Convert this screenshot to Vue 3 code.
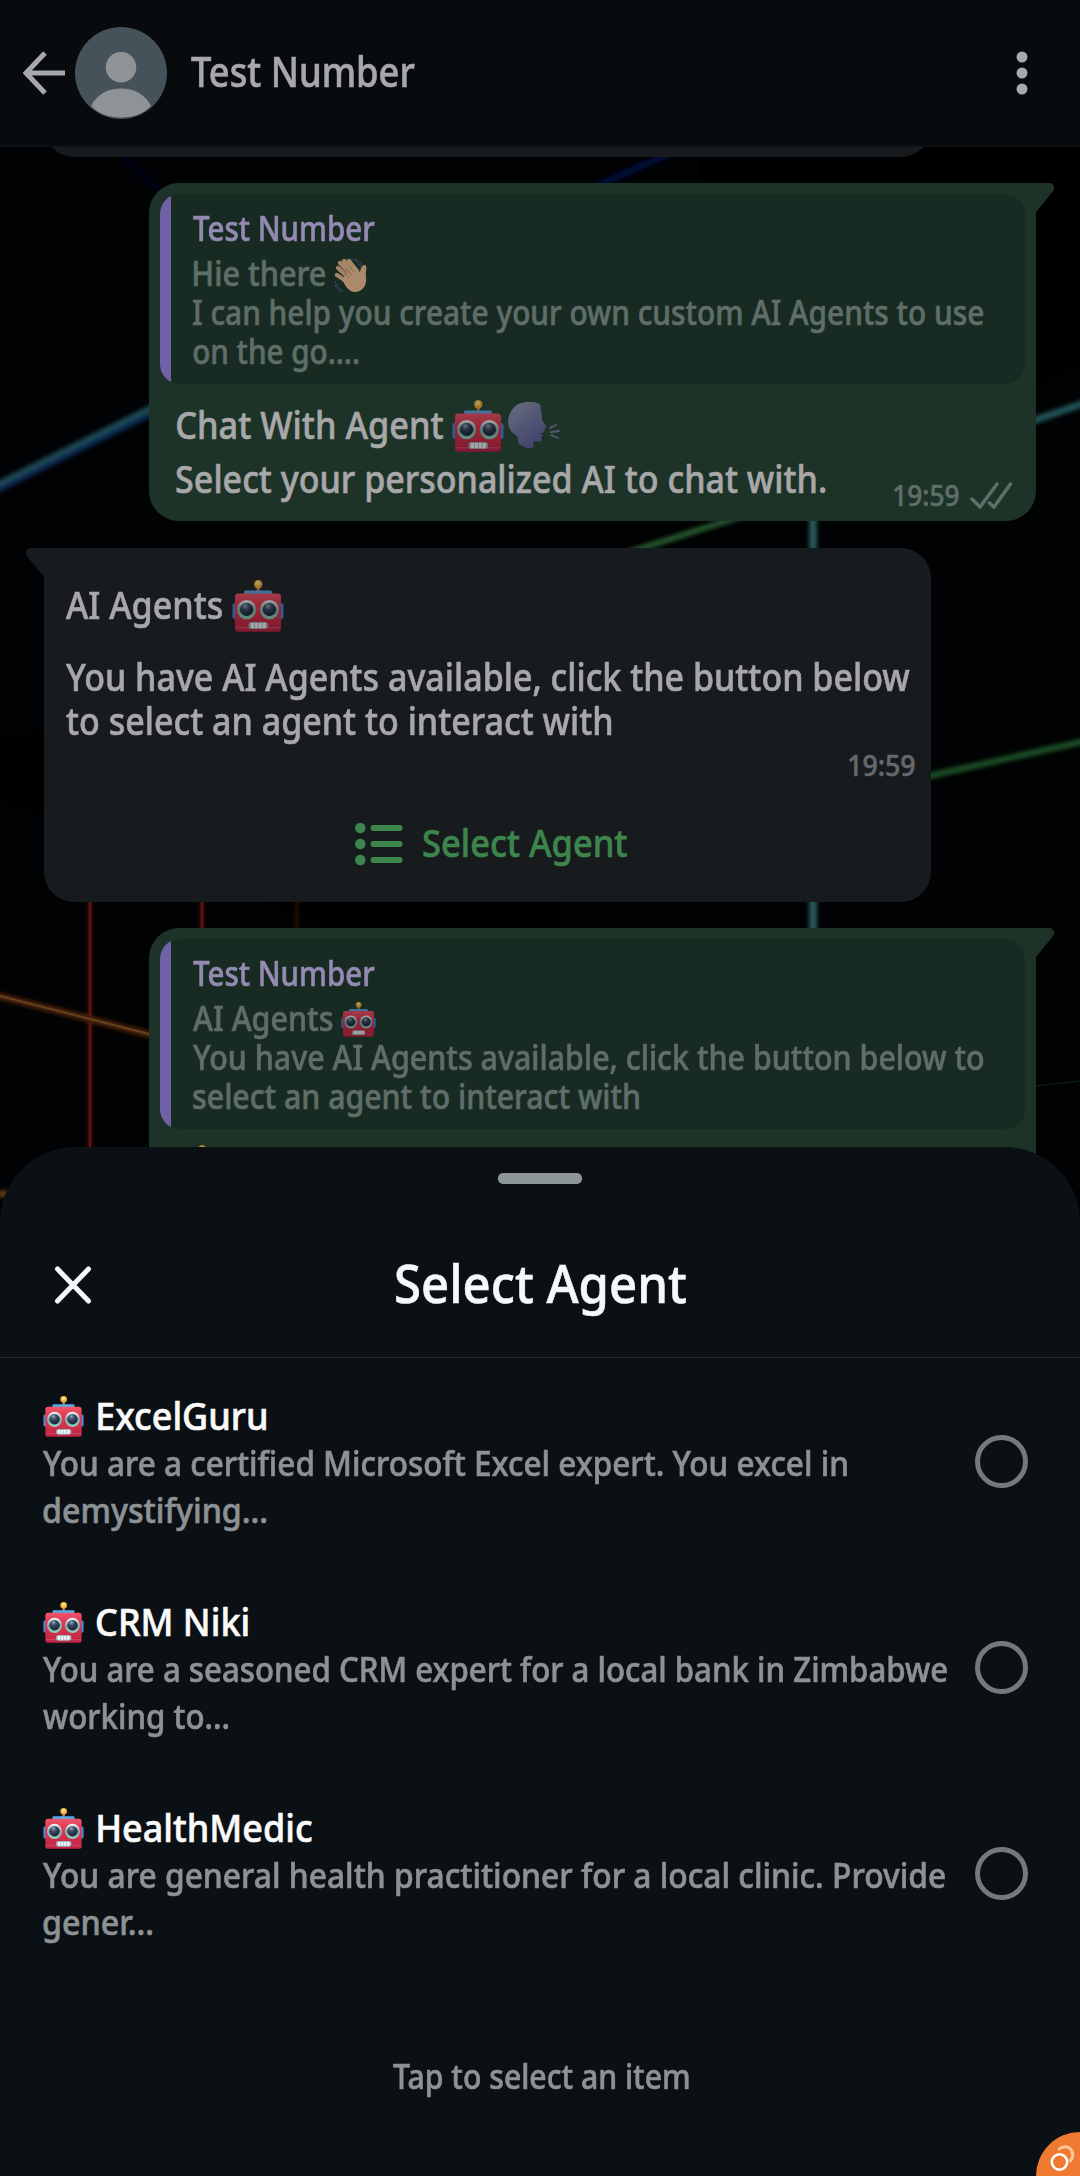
<script setup>
const agents = [
  { name: 'ExcelGuru', x: 14, w: 168, lines: [['You are a certified Microsoft Excel expert. You excel in', 804], ['demystifying...', 223]] },
  { name: 'CRM Niki', x: 13, w: 151, lines: [['You are a seasoned CRM expert for a local bank in Zimbabwe', 904], ['working to...', 185]] },
  { name: 'HealthMedic', x: 14, w: 214, lines: [['You are general health practitioner for a local clinic. Provide', 902], ['gener...', 109]] }
]

// Condenses a line of text so its visible glyphs span exactly the given width.
const vFit = {
  mounted(el, { value }) {
    const cs = getComputedStyle(el)
    const ctx = document.createElement('canvas').getContext('2d')
    ctx.font = `${cs.fontWeight} ${cs.fontSize} ${cs.fontFamily}`
    const m = ctx.measureText(el.textContent)
    const s = value / (m.actualBoundingBoxRight + m.actualBoundingBoxLeft)
    el.style.width = `${value}px`
    el.style.transform = `translateX(${m.actualBoundingBoxLeft * s}px) scaleX(${s})`
  }
}
</script>

<template>
  <div class="screen">
    <svg class="defs" width="0" height="0" aria-hidden="true">
      <defs>
        <linearGradient id="face" x1="0" y1="0" x2="0" y2="1">
          <stop offset="0" stop-color="#f0566c" /><stop offset=".3" stop-color="#e33b52" /><stop offset="1" stop-color="#bd2444" />
        </linearGradient>
        <linearGradient id="rim" x1="0" y1="0" x2="0" y2="1">
          <stop offset="0" stop-color="#f4f8f8" /><stop offset=".5" stop-color="#8ba7ad" /><stop offset="1" stop-color="#8fd0bd" />
        </linearGradient>
        <radialGradient id="iris" cx=".4" cy=".25" r=".7">
          <stop offset="0" stop-color="#93a5b6" /><stop offset=".4" stop-color="#3c4e63" /><stop offset="1" stop-color="#192536" />
        </radialGradient>
        <linearGradient id="talk" x1="0" y1="0" x2=".6" y2="1">
          <stop offset="0" stop-color="#6d7180" /><stop offset=".5" stop-color="#545875" /><stop offset="1" stop-color="#41456f" />
        </linearGradient>
      </defs>
      <symbol id="robot" viewBox="0 0 52 52">
        <rect x="24.7" y="6" width="3" height="6" fill="#b98258" />
        <circle cx="26.2" cy="4.2" r="4.2" fill="#f0b23c" /><circle cx="26" cy="3" r="2.2" fill="#ffe08a" />
        <rect x="12" y="10.5" width="28" height="4" rx="1.6" fill="#5aa9e6" />
        <rect x="0.5" y="23" width="5" height="16" rx="2.5" fill="#4a86dc" />
        <rect x="46.5" y="23" width="5" height="16" rx="2.5" fill="#4a86dc" />
        <rect x="3" y="13.5" width="46" height="38.3" rx="3.4" fill="url(#face)" />
        <path d="M4 47.8h44" stroke="#d9536f" stroke-width="1" />
        <circle cx="14.6" cy="29.6" r="9.6" fill="url(#rim)" /><circle cx="37.4" cy="29.6" r="9.6" fill="url(#rim)" />
        <circle cx="14.6" cy="29.4" r="6.6" fill="url(#iris)" /><circle cx="37.4" cy="29.4" r="6.6" fill="url(#iris)" />
        <rect x="16.5" y="42" width="19.5" height="7" rx="3" fill="#9fb5bf" />
        <path d="M18.7 45.5h3.4M23 45.5h2.8M26.8 45.5h2.8M30.6 45.5h3.2" stroke="#f6f6f6" stroke-width="5" />
      </symbol>
      <symbol id="tail" viewBox="0 0 20 30">
        <path d="M0 0H14C19 0 20.500 5 17.800 8.500L1 29H0Z" />
      </symbol>
    </svg>

    <header class="topbar">
      <svg class="back" width="42" height="44" viewBox="0 0 42 44"><path d="M22 2 3 22 22 42M3 22h39" /></svg>
      <svg class="avatar" width="92" height="92" viewBox="0 0 92 92">
        <circle cx="46" cy="46" r="46" fill="#45525a" />
        <circle cx="46" cy="40.300" r="15.300" fill="#8e9396" />
        <path d="M16 79C22 67 33 61.500 46 61.500S70 67 76 79C68 87 58 90.500 46 90.500S24 87 16 79Z" fill="#8e9396" />
      </svg>
      <span v-fit="224" class="t contact">Test Number</span>
      <svg class="more" width="12" height="44" viewBox="0 0 12 44"><circle cx="6" cy="6" r="5.500" /><circle cx="6" cy="22" r="5.500" /><circle cx="6" cy="38" r="5.500" /></svg>
    </header>

    <main class="chat">
      <svg class="wallpaper" width="1080" height="1083" viewBox="0 147 1080 1083">
        <defs><filter id="soft" x="-50" y="100" width="1200" height="1200" filterUnits="userSpaceOnUse"><feGaussianBlur stdDeviation="2" /></filter></defs>
        <rect y="147" width="1080" height="1083" fill="#010203" />
        <path d="M0 742 44 728V816L0 800ZM265 902H560V928H330ZM700 147H1080V365L1050 375 1036 385V183H700Z" fill="#000" />
        <g fill="none" filter="url(#soft)">
          <path d="M-10 492 155 410" stroke="#0b2650" stroke-width="9" /><path d="M-10 488 155 406" stroke="#1d4a57" stroke-width="6" />
          <path d="M118 152 168 198" stroke="#04062c" stroke-width="3" />
          <path d="M590 189 675 151" stroke="#000838" stroke-width="7" />
          <path d="M1030 422 1090 401" stroke="#24565a" stroke-width="7" />
          <path d="M630 552 745 515" stroke="#265a30" stroke-width="6" />
          <path d="M813 515V940" stroke="#2a5c5c" stroke-width="7.500" />
          <path d="M925 777 1090 740" stroke="#1f5226" stroke-width="6" />
          <path d="M90 895V1160M202 895V940" stroke="#44100a" stroke-width="4.500" /><path d="M297 895V940" stroke="#240806" stroke-width="4" />
          <path d="M-5 995 90 1019 155 1036" stroke="#54260c" stroke-width="6" /><path d="M-5 1194H12" stroke="#6a4010" stroke-width="6" />
        </g>
        <path d="M90 901V1150M202 901V930" stroke="#56180f" stroke-width="2" />
        <path d="M0 996 90 1019 149 1034" fill="none" stroke="#67401c" stroke-width="2" />
        <path d="M1036 1086 1080 1081" stroke="#0a1c11" stroke-width="1.500" />
      </svg>

      <div class="bubble incoming previous"></div>

      <section class="bubble outgoing first">
        <svg class="tail" width="20" height="30"><use href="#tail" /></svg>
        <div class="quote">
          <div class="author"><span v-fit="182" class="t">Test Number</span></div>
          <div class="row"><span v-fit="131" class="t nudge">Hie there</span>
            <svg class="wave" width="33" height="35" viewBox="0 0 33 35">
              <g fill="none" stroke="#39466a" stroke-width="1"><path d="M17 1C22 2 26 6 27 10M21 1C25 3 27 5 28 8M1 23C2 28 5 31 9 33M1 27C3 31 5 32 7 34" /></g>
              <path d="M14 19 4 10M17 16 6 5M20 14 10 3M23 13 15 3M12 23 3 17" stroke="#a58567" stroke-width="4.300" stroke-linecap="round" />
              <path d="M8 21 20 9 26 14C27 10 28 7 31 7 34 8 31 14 32 19 33 28 28 34 21 34 15 34 11 28 8 21Z" fill="#ab8a6c" />
              <path d="M10 15 15 20M12 11 18 17M16 9 21 15" stroke="#765a43" stroke-width=".8" />
            </svg>
          </div>
          <div class="row"><span v-fit="790" class="t">I can help you create your own custom AI Agents to use</span></div>
          <div class="row"><span v-fit="165" class="t">on the go....</span></div>
        </div>
        <div class="body">
          <div class="row"><span v-fit="266" class="t nudge">Chat With Agent</span>
            <svg class="robot dim" width="52" height="52"><use href="#robot" /></svg>
            <svg class="talk" width="52" height="47" viewBox="0 0 52 47">
              <path d="M20 0C30-.5 34 3 32.500 6 34 8 32 10 34 13L34 18 38 24C39 26 37 27 36 27 38 30 35 32 31 31 36 33 35 34 33 35 36 40 31 40 26 39L25 46C18 47 14 44 11 42L9 34C-3 27-1 15 4 8 8 2 14 0 20 0Z" fill="url(#talk)" />
              <path d="M42 26 48 23M43 30 51 29M43 33 50 36" stroke="#555b75" stroke-width="1.800" stroke-linecap="round" />
            </svg>
          </div>
          <div class="row spread"><span v-fit="649" class="t">Select your personalized AI to chat with.</span>
            <div class="meta"><span v-fit="65" class="t">19:59</span>
              <svg width="42" height="27" viewBox="0 0 42 27"><path d="M2 17 10 25 27 2M19.500 21 24 25 40.500 2" /></svg>
            </div>
          </div>
        </div>
      </section>

      <section class="bubble incoming">
        <svg class="tail" width="20" height="30"><use href="#tail" /></svg>
        <div class="row heading"><span v-fit="156" class="t">AI Agents</span><svg class="robot dim" width="52" height="52"><use href="#robot" /></svg></div>
        <div class="row"><span v-fit="844" class="t">You have AI Agents available, click the button below</span></div>
        <div class="row"><span v-fit="545" class="t">to select an agent to interact with</span></div>
        <div class="time"><span v-fit="66" class="t">19:59</span></div>
        <div class="action">
          <svg width="48" height="44" viewBox="0 0 48 44"><g v-for="y in [6, 22, 38]" :key="y"><circle cx="5.300" :cy="y" r="5.300" /><rect x="15.500" :y="y - 3" width="32" height="6" rx="3" /></g></svg>
          <span v-fit="204" class="t">Select Agent</span>
        </div>
      </section>

      <section class="bubble outgoing last">
        <svg class="tail" width="20" height="30"><use href="#tail" /></svg>
        <div class="quote">
          <div class="author"><span v-fit="182" class="t">Test Number</span></div>
          <div class="row"><span v-fit="140" class="t">AI Agents</span><svg class="robot dim small" width="35" height="35"><use href="#robot" /></svg></div>
          <div class="row"><span v-fit="790" class="t">You have AI Agents available, click the button below to</span></div>
          <div class="row"><span v-fit="446" class="t">select an agent to interact with</span></div>
        </div>
        <svg class="robot dim peek" width="52" height="52"><use href="#robot" /></svg>
      </section>
    </main>

    <section class="sheet">
      <div class="handle"></div>
      <div class="sheet-head">
        <svg class="close" width="38" height="38" viewBox="0 0 38 38"><path d="M3.500 3 34.500 35M34.500 3 3.500 35" /></svg>
        <span v-fit="290" class="t">Select Agent</span>
      </div>
      <ul class="agents">
        <li v-for="a in agents" :key="a.name">
          <div class="agent">
            <div class="name"><svg width="41" height="41"><use href="#robot" /></svg><span v-fit="a.w" class="t" :style="{ marginLeft: a.x + 'px' }">{{ a.name }}</span></div>
            <div v-for="l in a.lines" :key="l[0]" class="desc"><span v-fit="l[1]" class="t">{{ l[0] }}</span></div>
          </div>
          <span class="radio"></span>
        </li>
      </ul>
      <div class="hint"><span v-fit="296" class="t">Tap to select an item</span></div>
      <svg class="badge" width="44" height="44" viewBox="0 0 44 44">
        <circle cx="44" cy="44" r="44" fill="#f17a32" />
        <path d="M22.500 18C25 14.500 31 13.500 34.500 17S37 27 33.500 29.500" fill="none" stroke="#fbc9a0" stroke-width="3" />
        <circle cx="23.500" cy="30" r="7.700" fill="none" stroke="#fff" stroke-width="2.600" />
      </svg>
    </section>
  </div>
</template>

<style>
body { margin: 0; background: #000; }
</style>

<style scoped>
.screen { position: relative; width: 1080px; height: 2176px; overflow: hidden; display: flex; flex-direction: column; background: #0b1014; font-family: "Noto Sans", "Open Sans", sans-serif; font-weight: 500; }
.defs { position: absolute; }
.t { display: inline-block; flex: none; white-space: nowrap; transform-origin: 0 50%; -webkit-text-stroke: .6px currentColor; }
svg { display: block; flex: none; }

.topbar { box-sizing: border-box; flex: none; height: 147px; display: flex; align-items: center; padding: 0 52px 0 23px; background: #070b0e; border-bottom: 2px solid #0e1113; }
.back { fill: none; stroke: #a8a7a9; stroke-width: 5; }
.avatar { margin-left: 10px; }
.contact { margin-left: 24px; font-size: 42px; line-height: 60px; color: #a8a7a9; margin-bottom: 4px; }
.more { margin-left: auto; fill: #a8a7a9; }

.chat { position: relative; isolation: isolate; flex: none; height: 1000px; display: flex; flex-direction: column; }
.wallpaper { position: absolute; top: 0; left: 0; z-index: -1; }
.bubble { position: relative; box-sizing: border-box; flex: none; width: 887px; border-radius: 30px; }
.incoming { margin-left: 44px; background: #171b1e; border-top-left-radius: 0; color: #a8a7a9; }
.outgoing { margin-left: 149px; background: #1d3328; border-top-right-radius: 0; padding: 11px 11px 0; }
.previous { height: 80px; margin-top: -70px; clip-path: inset(70px 0 0 0); }
.first { height: 338px; margin-top: 26px; }
.incoming:not(.previous) { height: 354px; margin-top: 27px; padding: 28px 16px 0 22px; font-size: 38px; }
.last { height: 260px; margin-top: 26px; }
.tail { position: absolute; top: 0; left: 100%; margin-left: -1px; fill: #1d3328; }
.incoming .tail { left: -19px; margin: 0; transform: scaleX(-1); fill: #171b1e; }

.quote { box-sizing: border-box; height: 190px; padding: 12px 20px 13px 33px; border-radius: 20px; background: linear-gradient(90deg, #7162a7 11px, #182b23 11px); color: #5f6e68; font-size: 34px; }
.author { height: 43px; line-height: 43px; margin-bottom: 5px; color: #948ab2; font-size: 34.500px; }
.row { display: flex; }
.quote .row { height: 39px; line-height: 39px; }
.nudge { margin-left: 1px; }
.wave { margin: 4px 0 0 9px; }
.body { margin-top: 13px; padding-left: 16px; color: #a8a7a9; font-size: 38.500px; }
.body .row { height: 54px; line-height: 54px; }
.dim { filter: brightness(.68); }
.body .robot { margin: 3px 0 0 9px; }
.talk { margin: 5px 0 0 4px; }
.spread { justify-content: space-between; }
.meta { display: flex; gap: 11px; margin: 27px 13px 0 0; height: 34px; font-size: 29px; line-height: 34px; color: #5f6e68; }
.meta svg { margin-top: 4px; fill: none; stroke: #5f6e68; stroke-width: 3.500; stroke-linecap: round; }

.incoming .row { height: 44px; line-height: 44px; }
.incoming .heading { height: 54px; line-height: 54px; padding: 1px 0 23px; }
.heading .robot { margin: 3px 0 0 10px; }
.small { margin: 3px 0 0 8px; }
.time { display: flex; justify-content: flex-end; margin-top: 6px; font-size: 29px; line-height: 34px; color: #67686a; }
.action { display: flex; align-items: center; justify-content: center; gap: 20px; height: 60px; margin: 30px 0 0; font-size: 38px; line-height: 60px; color: #3d854c; }
.action svg { fill: #3d854c; margin-top: 3px; }
.action .t { margin-top: -1px; }
.peek { margin: 16px 0 0 16px; }

.sheet { position: relative; z-index: 1; box-sizing: border-box; flex: none; height: 1029px; display: flex; flex-direction: column; background: #0b1014; border-radius: 75px 75px 0 0; }
.handle { align-self: center; flex: none; width: 84px; height: 11px; margin-top: 26px; border-radius: 5px; background: #8e9598; }
.sheet-head { flex: none; height: 173px; display: flex; align-items: center; padding-left: 54px; border-bottom: 1px solid #252a2d; color: #f7f8fa; font-size: 52px; line-height: 72px; }
.sheet-head .close { fill: none; stroke: #f7f8fa; stroke-width: 5; stroke-linecap: round; margin-top: 28px; }
.sheet-head .t { margin: 24px 0 0 304px; }
.agents { list-style: none; margin: 0; padding: 31px 52px 0 43px; display: flex; flex-direction: column; }
.agents li { height: 206px; display: flex; justify-content: space-between; }
.name { display: flex; align-items: center; height: 55px; line-height: 55px; font-size: 38px; color: #fafafa; }
.name .t { margin-top: -2px; }
.desc { height: 47px; line-height: 47px; font-size: 33.500px; color: #8d9295; }
.desc .t { margin-top: -4px; vertical-align: top; }
.radio { box-sizing: border-box; width: 53px; height: 53px; margin: 46px 0 0; border: 5px solid #74797c; border-radius: 50%; }
.hint { display: flex; justify-content: center; margin-top: 46px; padding-left: 2px; font-size: 33.500px; line-height: 47px; color: #8d9295; }
.badge { position: absolute; right: 0; bottom: 0; }
</style>
